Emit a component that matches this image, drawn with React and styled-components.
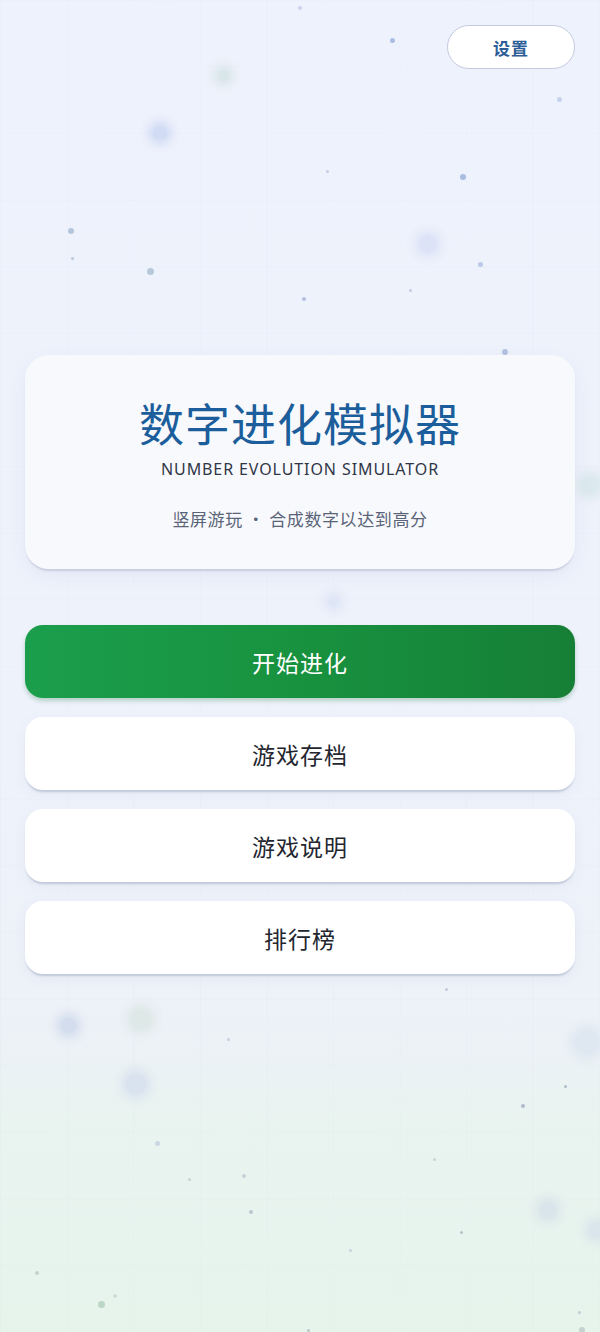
import styled, { createGlobalStyle } from "styled-components";

const GlobalStyle = createGlobalStyle`
  html, body {
    margin: 0;
    padding: 0;
  }
  body {
    font-family: "Noto Sans", "Noto Sans CJK SC", sans-serif;
    background: #eef2fb;
  }
  * {
    box-sizing: border-box;
  }
`;

const particles = [
  { x: 223, y: 75, s: 11, c: "#d3e2e4", glow: true },
  { x: 160, y: 133, s: 14, c: "#c9d5f3", glow: true },
  { x: 392, y: 40, s: 5, c: "#a9bde2" },
  { x: 300, y: 8, s: 4, c: "#c9d3ea" },
  { x: 463, y: 177, s: 6, c: "#a9bde2" },
  { x: 71, y: 231, s: 6, c: "#b5c6dc" },
  { x: 150, y: 271, s: 7, c: "#b7c8da" },
  { x: 72, y: 258, s: 3, c: "#b9c6db" },
  { x: 428, y: 244, s: 16, c: "#d6def6", glow: true },
  { x: 304, y: 299, s: 4, c: "#b0c0dc" },
  { x: 505, y: 352, s: 6, c: "#b1c2e0" },
  { x: 410, y: 290, s: 3, c: "#c2cde3" },
  { x: 327, y: 171, s: 3, c: "#c2cde3" },
  { x: 559, y: 99, s: 5, c: "#c6d2ec" },
  { x: 480, y: 264, s: 5, c: "#b9c9e6" },
  { x: 590, y: 485, s: 18, c: "#d7e6ea", glow: true },
  { x: 333, y: 601, s: 11, c: "#dbe3f5", glow: true },
  { x: 68, y: 1025, s: 15, c: "#cbd7ea", glow: true },
  { x: 141, y: 1019, s: 20, c: "#dae6e2", glow: true },
  { x: 136, y: 1084, s: 20, c: "#d4deee", glow: true },
  { x: 587, y: 1042, s: 24, c: "#dbe5f0", glow: true },
  { x: 548, y: 1210, s: 16, c: "#d6e0ea", glow: true },
  { x: 597, y: 1230, s: 16, c: "#d6e2ea", glow: true },
  { x: 157, y: 1143, s: 5, c: "#c9d7e2" },
  { x: 228, y: 1039, s: 3, c: "#c4d1de" },
  { x: 523, y: 1106, s: 4, c: "#aebcca" },
  { x: 565, y: 1086, s: 3, c: "#aebcca" },
  { x: 244, y: 1176, s: 4, c: "#c3d1d8" },
  { x: 251, y: 1212, s: 4, c: "#b9c7cf" },
  { x: 189, y: 1179, s: 3, c: "#c6d3d9" },
  { x: 461, y: 1232, s: 3, c: "#b3c1c9" },
  { x: 434, y: 1159, s: 3, c: "#c8d4da" },
  { x: 350, y: 1250, s: 3, c: "#c8d4da" },
  { x: 101, y: 1304, s: 7, c: "#bcd6c6" },
  { x: 115, y: 1296, s: 4, c: "#d0ddd6" },
  { x: 37, y: 1273, s: 4, c: "#c1d1cd" },
  { x: 446, y: 989, s: 3, c: "#c1ccdc" },
  { x: 579, y: 1312, s: 3, c: "#c1ccd4" },
  { x: 582, y: 1330, s: 6, c: "#c5d2d0" },
  { x: 308, y: 1330, s: 3, c: "#b8c6c6" },
];

export default function App() {
  return (
    <>
      <GlobalStyle />
      <Screen>
        <Grid />
        {particles.map((p, i) => (
          <Particle
            key={`p-${i}`}
            $glow={p.glow}
            style={{
              left: p.x - p.s / 2,
              top: p.y - p.s / 2,
              width: p.s,
              height: p.s,
              background: p.c,
              color: p.c,
            }}
          />
        ))}
        <Content>
          <TopBar>
            <SettingsButton>设置</SettingsButton>
          </TopBar>

          <HeroCard>
            <Title>数字进化模拟器</Title>
            <Subtitle>NUMBER EVOLUTION SIMULATOR</Subtitle>
            <Tagline>竖屏游玩 · 合成数字以达到高分</Tagline>
          </HeroCard>

          <Menu>
            <MenuButton $primary>开始进化</MenuButton>
            <MenuButton>游戏存档</MenuButton>
            <MenuButton>游戏说明</MenuButton>
            <MenuButton>排行榜</MenuButton>
          </Menu>
        </Content>
      </Screen>
    </>
  );
}

const Screen = styled.div`
  position: relative;
  width: 600px;
  height: 1332px;
  overflow: hidden;
  background: linear-gradient(
    180deg,
    #eef2fc 0%,
    #eef2fb 55%,
    #edf1f8 76%,
    #e9f3f0 84%,
    #e6f4ec 100%
  );
`;

const Grid = styled.div`
  position: absolute;
  inset: 0;
  background-image: linear-gradient(
      to right,
      rgba(170, 185, 215, 0.045) 1px,
      transparent 1px
    ),
    linear-gradient(to bottom, rgba(170, 185, 215, 0.045) 1px, transparent 1px);
  background-size: 66.6px 66.6px;
`;

const Particle = styled.span`
  position: absolute;
  border-radius: 50%;
  box-shadow: ${(p) => (p.$glow ? "0 0 10px 5px currentColor" : "none")};
  opacity: ${(p) => (p.$glow ? 0.75 : 1)};
`;

const Content = styled.div`
  position: relative;
  z-index: 1;
  display: flex;
  flex-direction: column;
  padding: 0 25px;
`;

const TopBar = styled.div`
  display: flex;
  justify-content: flex-end;
  padding-top: 25px;
`;

const SettingsButton = styled.button`
  width: 128px;
  height: 44px;
  border-radius: 22px;
  border: 1.5px solid #c3cbe0;
  background: #ffffff;
  color: #2c5d96;
  font-family: "Noto Sans CJK SC", sans-serif;
  font-size: 17px;
  font-weight: 700;
  letter-spacing: 1px;
  cursor: pointer;
`;

const HeroCard = styled.div`
  margin-top: 286px;
  height: 214px;
  border-radius: 24px;
  background: rgba(249, 250, 252, 0.86);
  box-shadow: 0 3px 2px -1px rgba(160, 170, 195, 0.45),
    0 6px 18px rgba(150, 165, 200, 0.12);
  display: flex;
  flex-direction: column;
  align-items: center;
  padding-top: 36px;
`;

const Title = styled.h1`
  margin: 0;
  font-family: "Noto Sans CJK SC", sans-serif;
  font-size: 45px;
  line-height: 64px;
  font-weight: 400;
  color: #1b5e9b;
  letter-spacing: 1px;
`;

const Subtitle = styled.div`
  margin-top: 2px;
  font-family: "Noto Sans", sans-serif;
  font-size: 16px;
  line-height: 24px;
  color: #2f3647;
  letter-spacing: 0.9px;
`;

const Tagline = styled.div`
  margin-top: 25px;
  font-family: "Noto Sans CJK SC", sans-serif;
  font-size: 17px;
  line-height: 26px;
  color: #5a6479;
  letter-spacing: 0.6px;
`;

const Menu = styled.div`
  margin-top: 56px;
  display: flex;
  flex-direction: column;
  gap: 19px;
`;

const MenuButton = styled.button`
  height: 73px;
  border: none;
  border-radius: 18px;
  font-family: "Noto Sans CJK SC", sans-serif;
  font-size: 23px;
  font-weight: 400;
  letter-spacing: 1px;
  cursor: pointer;
  color: ${(p) => (p.$primary ? "#ffffff" : "#23262f")};
  background: ${(p) =>
    p.$primary
      ? "linear-gradient(90deg, #1b9e4c 0%, #18923f 50%, #167f36 100%)"
      : "#ffffff"};
  box-shadow: ${(p) =>
    p.$primary
      ? "0 3px 4px rgba(20, 110, 50, 0.25)"
      : "0 3px 2px -1px rgba(160, 172, 195, 0.55), 0 4px 12px rgba(150, 165, 200, 0.1)"};
`;
